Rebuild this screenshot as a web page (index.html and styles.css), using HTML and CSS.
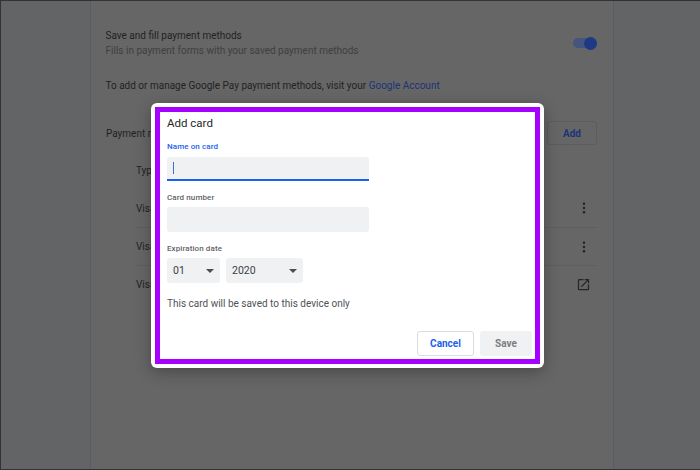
FILE: index.html
```html
<!DOCTYPE html>
<html lang="en">
<head>
  <meta charset="UTF-8" />
  <title>Add card</title>
  <link rel="stylesheet" href="styles.css">
</head>
<body>

  <!-- Settings page behind the dialog -->
  <div class="page">
    <div class="setting">
      <div class="setting-text">
        <div class="setting-title">Save and fill payment methods</div>
        <div class="setting-sub">Fills in payment forms with your saved payment methods</div>
      </div>
      <div class="toggle"><span class="knob"></span></div>
    </div>

    <div class="manage">To add or manage Google Pay payment methods, visit your <a href="#">Google Account</a></div>

    <div class="methods-head">
      <span>Payment methods</span>
      <button class="add-btn">Add</button>
    </div>

    <div class="methods">
      <div class="row row-head">Type</div>
      <div class="row row-first">
        <span>Visa</span>
        <svg class="dots" viewBox="0 0 4 14"><circle cx="2" cy="2" r="1.4"/><circle cx="2" cy="7" r="1.4"/><circle cx="2" cy="12" r="1.4"/></svg>
      </div>
      <div class="row">
        <span>Visa</span>
        <svg class="dots" viewBox="0 0 4 14"><circle cx="2" cy="2" r="1.4"/><circle cx="2" cy="7" r="1.4"/><circle cx="2" cy="12" r="1.4"/></svg>
      </div>
      <div class="row">
        <span>Visa</span>
        <svg class="launch" viewBox="0 0 24 24"><path d="M19 19H5V5h7V3H5a2 2 0 0 0-2 2v14a2 2 0 0 0 2 2h14a2 2 0 0 0 2-2v-7h-2v7zM14 3v2h3.6l-9.8 9.8 1.4 1.4L19 6.4V10h2V3h-7z"/></svg>
      </div>
    </div>
  </div>

  <div class="overlay-dialog">
    <div class="dialog">
      <h1>Add card</h1>

      <label class="active">Name on card</label>
      <div class="field focused"><span class="caret"></span></div>

      <label>Card number</label>
      <div class="field"></div>

      <label>Expiration date</label>
      <div class="selects">
        <div class="select month"><span>01</span><i class="arrow"></i></div>
        <div class="select year"><span>2020</span><i class="arrow"></i></div>
      </div>

      <p class="note">This card will be saved to this device only</p>

      <div class="actions">
        <button class="cancel">Cancel</button>
        <button class="save">Save</button>
      </div>
    </div>
  </div>

</body>
</html>
```

FILE: styles.css
```css
* {
  margin: 0;
  padding: 0;
  box-sizing: border-box;
}

html, body {
  height: 100%;
}

body {
  background-color: #636466;
  font-family: Roboto, 'Liberation Sans', sans-serif;
  color: #222222;
  border: 1px solid #333333;
  border-right: none;
  overflow: hidden;
  position: relative;
}

/* Background page */
.page {
  width: 524px;
  height: 100%;
  margin-left: 89px;
  padding: 27px 16px 0 15px;
  background-color: #666666;
  border-left: 1px solid #5c5c5c;
  border-right: 1px solid #5c5c5c;
  font-size: 10px;
}

.setting {
  display: flex;
  justify-content: space-between;
  align-items: center;
  height: 30px;
  margin-left: -0.5px;
}

.setting-title {
  line-height: 15px;
}

.setting-sub {
  line-height: 15px;
  color: #3f3f3f;
}

.toggle {
  position: relative;
  width: 24px;
  height: 10px;
  background-color: #46557f;
  border-radius: 5px;
}

.knob {
  position: absolute;
  right: 0;
  top: -1.5px;
  width: 13px;
  height: 13px;
  background-color: #1f3a85;
  border-radius: 50%;
}

.manage {
  margin-top: 20px;
  margin-left: -0.5px;
  line-height: 15px;
}

.manage a {
  color: #1c3478;
  text-decoration: none;
}

.methods-head {
  display: flex;
  justify-content: space-between;
  align-items: center;
  margin-top: 28px;
  height: 24px;
}

.add-btn {
  width: 50px;
  height: 24px;
  background: none;
  border: 1px solid #5c5c5c;
  border-radius: 3px;
  color: #1c3478;
  font: 700 10px Roboto, sans-serif;
}

.methods {
  margin-top: 7px;
  padding-left: 30px;
}

.row {
  display: flex;
  justify-content: space-between;
  align-items: center;
  height: 38px;
  border-top: 1px solid #5f5f5f;
  padding-right: 6px;
}

.row-head {
  height: 37px;
  border-top: none;
}

.row-first {
  border-top: none;
}

.dots {
  width: 4px;
  height: 12px;
  margin-right: 5px;
  fill: #222222;
}

.launch {
  width: 15px;
  height: 15px;
  fill: #262626;
}

/* Dialog */
.overlay-dialog {
  position: absolute;
  left: 150px;
  top: 102px;
  width: 393px;
  height: 265px;
  padding: 4px;
  background-color: #ffffff;
  border-radius: 6px;
  box-shadow: 0 4px 16px rgba(0, 0, 0, 0.3);
}

.dialog {
  height: 257px;
  width: 385px;
  padding: 4px 0 0 7px;
  background-color: #ffffff;
  border: 5px solid #a600ff;
}

h1 {
  font-size: 11.5px;
  font-weight: 400;
  line-height: 15px;
  color: #262626;
}

label {
  display: block;
  height: 11px;
  font-size: 8px;
  font-weight: 500;
  line-height: 11px;
  letter-spacing: 0.1px;
  color: #5f6368;
}

label.active {
  color: #1a5ff0;
  margin-top: 10px;
}

.field {
  width: 202px;
  height: 25px;
  margin-top: 4px;
  margin-bottom: 11px;
  display: flex;
  align-items: center;
  padding-left: 6px;
  background-color: #f0f1f3;
  border-radius: 3px;
}

.focused {
  height: 24px;
  margin-top: 5px;
  border-radius: 3px 3px 0 0;
  border-bottom: 2px solid #1a5ff0;
}

.caret {
  display: block;
  width: 1px;
  height: 12px;
  background-color: #3b6fd8;
}

.selects {
  display: flex;
  gap: 6px;
  margin-top: 4px;
}

.select {
  display: flex;
  justify-content: space-between;
  align-items: center;
  height: 25px;
  padding: 0 5px 0 6px;
  font-size: 10.5px;
  color: #3c4043;
  background-color: #f0f1f3;
  border-radius: 3px;
}

.month {
  width: 53px;
}

.year {
  width: 77px;
}

.arrow {
  display: block;
  width: 0;
  height: 0;
  margin-right: 1px;
  border-left: 4px solid transparent;
  border-right: 4px solid transparent;
  border-top: 4px solid #4a4d51;
}

.note {
  margin-top: 14px;
  font-size: 10px;
  line-height: 14px;
  color: #4f5256;
}

.actions {
  display: flex;
  justify-content: flex-end;
  gap: 6px;
  margin-top: 20px;
  margin-right: 3px;
}

.actions button {
  height: 25px;
  font: 700 10px Roboto, sans-serif;
  border-radius: 3px;
}

.cancel {
  width: 57px;
  color: #1a5ff0;
  background-color: #ffffff;
  border: 1px solid #dadce0;
}

.save {
  width: 52px;
  color: #7c7e82;
  background-color: #f0f1f3;
  border: none;
}
```
